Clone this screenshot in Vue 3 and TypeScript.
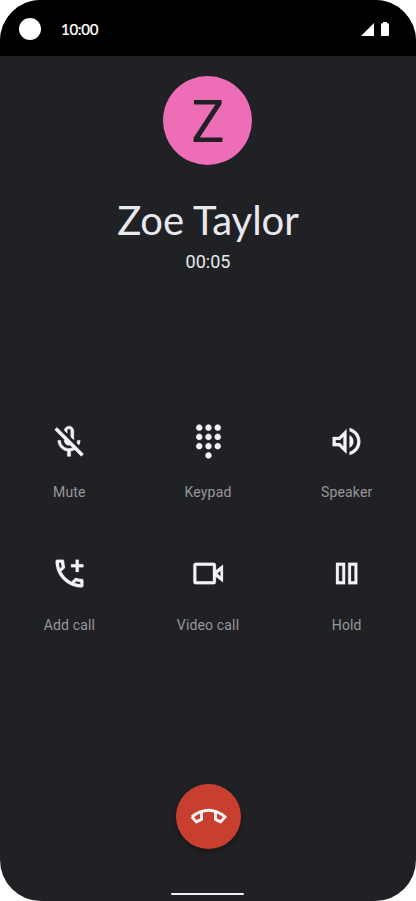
<script setup lang="ts">
interface CallAction {
  id: string
  label: string
  path: string
}

const actions: CallAction[] = [
  {
    id: 'mute',
    label: 'Mute',
    path: 'M10.8 4.9c0-.66.54-1.2 1.2-1.2s1.2.54 1.2 1.2l-.01 3.91L15 10.6V5c0-1.66-1.34-3-3-3-1.54 0-2.79 1.16-2.96 2.65l1.76 1.76V4.9zM19 11h-1.7c0 .58-.1 1.13-.27 1.64l1.27 1.27c.44-.88.7-1.87.7-2.91zM4.41 2.86L3 4.27l6 6V11c0 1.66 1.34 3 3 3 .23 0 .44-.03.65-.08l1.66 1.66c-.71.33-1.5.52-2.31.52-2.76 0-5.3-2.1-5.3-5.1H5c0 3.41 2.72 6.23 6 6.72V21h2v-3.28c.91-.13 1.77-.45 2.55-.9l4.2 4.2 1.41-1.41L4.41 2.86z',
  },
  {
    id: 'keypad',
    label: 'Keypad',
    path: 'M12 19c-1.1 0-2 .9-2 2s.9 2 2 2 2-.9 2-2-.9-2-2-2zM6 1c-1.1 0-2 .9-2 2s.9 2 2 2 2-.9 2-2-.9-2-2-2zm0 6c-1.1 0-2 .9-2 2s.9 2 2 2 2-.9 2-2-.9-2-2-2zm0 6c-1.1 0-2 .9-2 2s.9 2 2 2 2-.9 2-2-.9-2-2-2zm12-8c1.1 0 2-.9 2-2s-.9-2-2-2-2 .9-2 2 .9 2 2 2zm-6 8c-1.1 0-2 .9-2 2s.9 2 2 2 2-.9 2-2-.9-2-2-2zm6 0c-1.1 0-2 .9-2 2s.9 2 2 2 2-.9 2-2-.9-2-2-2zm0-6c-1.1 0-2 .9-2 2s.9 2 2 2 2-.9 2-2-.9-2-2-2zm-6 0c-1.1 0-2 .9-2 2s.9 2 2 2 2-.9 2-2-.9-2-2-2zm0-6c-1.1 0-2 .9-2 2s.9 2 2 2 2-.9 2-2-.9-2-2-2z',
  },
  {
    id: 'speaker',
    label: 'Speaker',
    path: 'M3 9v6h4l5 5V4L7 9H3zm7-.17v6.34L7.83 13H5v-2h2.83L10 8.83zM16.5 12c0-1.77-1.02-3.29-2.5-4.03v8.05c1.48-.73 2.5-2.25 2.5-4.02zM14 3.23v2.06c2.89.86 5 3.54 5 6.71s-2.11 5.85-5 6.71v2.06c4.01-.91 7-4.49 7-8.77 0-4.28-2.99-7.86-7-8.77z',
  },
  {
    id: 'add',
    label: 'Add call',
    path: 'M20 15.5c-1.25 0-2.45-.2-3.57-.57-.1-.03-.21-.05-.31-.05-.26 0-.51.1-.71.29l-2.2 2.2c-2.83-1.44-5.15-3.75-6.59-6.59l2.2-2.2c.28-.26.36-.65.25-1C8.7 6.45 8.5 5.25 8.5 4c0-.55-.45-1-1-1H4c-.55 0-1 .45-1 1 0 9.39 7.61 17 17 17 .55 0 1-.45 1-1v-3.5c0-.55-.45-1-1-1zM5.03 5h1.5c.07.88.22 1.75.46 2.59L5.79 8.8c-.41-1.21-.67-2.48-.76-3.8zM19 18.97c-1.32-.09-2.6-.35-3.8-.76l1.2-1.2c.85.24 1.71.39 2.6.45v1.51zM18 8h3V6h-3V3h-2v3h-3v2h3v3h2V8z',
  },
  {
    id: 'video',
    label: 'Video call',
    path: 'M3.7 5H15.3A1.5 1.5 0 0 1 16.8 6.5V9.9L21.4 6.3V17.7L16.8 14.1V17.5A1.5 1.5 0 0 1 15.3 19H3.7A1.5 1.5 0 0 1 2.2 17.5V6.5A1.5 1.5 0 0 1 3.7 5zM4.1 6.9V17.1H14.9V6.9zM17.8 12L19.8 13.9V10.1z',
  },
  {
    id: 'hold',
    label: 'Hold',
    path: 'M5.2 5H11.1V19H5.2zM7 6.9V17.1H9.3V6.9zM13.1 5H19V19H13.1zM14.9 6.9V17.1H17.2V6.9z',
  },
]
</script>

<template>
  <main class="phone">
    <header class="status">
      <span class="camera"></span>
      <span class="clock">10:00</span>
      <svg class="signal" viewBox="0 0 13 13"><path d="M13 0V13H0z" /></svg>
      <svg class="battery" viewBox="0 0 8 14"><path d="M2 0H6V1.2H7.2Q8 1.2 8 2V13.2Q8 14 7.2 14H.8Q0 14 0 13.2V2Q0 1.2.8 1.2H2z" /></svg>
    </header>
    <section class="caller">
      <div class="avatar"><span class="initial">Z</span></div>
      <h1 class="name">Zoe Taylor</h1>
      <p class="timer">00:05</p>
    </section>
    <section class="actions">
      <button v-for="action in actions" :key="action.id" class="action" type="button">
        <svg class="icon" :class="action.id" viewBox="0 0 24 24"><path :d="action.path" fill-rule="evenodd" /></svg>
        <span class="label">{{ action.label }}</span>
      </button>
    </section>
    <footer class="bottom">
      <button class="hangup" type="button" aria-label="End call">
        <svg class="receiver" viewBox="0 0 24 24">
          <path d="M1.2 12.2Q12 3.7 22.8 12.2L19.9 15.5L16.5 13.9V9.2M1.2 12.2L4.1 15.5L7.5 13.9V9.2" />
        </svg>
      </button>
      <span class="home"></span>
    </footer>
  </main>
</template>

<style>
body {
  margin: 0;
  background: #fff;
}
</style>

<style scoped>
.phone {
  width: 416px;
  height: 901px;
  display: flex;
  flex-direction: column;
  overflow: hidden;
  border-radius: 41px;
  background: #202125;
  color: #e8e9ee;
  font-family: Roboto, sans-serif;
}
.status {
  box-sizing: border-box;
  flex: none;
  height: 56px;
  display: flex;
  align-items: center;
  padding: 2px 27px 0 19px;
  background: #000;
}
.camera {
  width: 22px;
  height: 22px;
  border-radius: 50%;
  background: #fff;
}
.clock {
  margin-left: 20px;
  margin-right: auto;
  color: #fff;
  font: 500 15px/20px Lato, sans-serif;
  letter-spacing: -0.3px;
  -webkit-text-stroke: 0.2px #fff;
}
.signal {
  width: 13px;
  height: 13px;
  margin-right: 7px;
  fill: #fff;
}
.battery {
  width: 8px;
  height: 14px;
  fill: #fff;
}
.caller {
  flex: none;
  height: 354px;
  display: flex;
  flex-direction: column;
  align-items: center;
}
.avatar {
  width: 89px;
  height: 89px;
  margin: 20px 1px 0 0;
  display: flex;
  align-items: center;
  justify-content: center;
  border-radius: 50%;
  background: #ee6db7;
  color: #202125;
  font-size: 60px;
  line-height: 60px;
}
.initial {
  padding-top: 2px;
  transform: scaleX(0.93);
}
.name {
  margin: 31px 0 0;
  font: 400 40px/48px Lato, sans-serif;
  white-space: nowrap;
}
.timer {
  margin: 8px 0 0;
  font-size: 18px;
  line-height: 20px;
}
.actions {
  flex: none;
  display: grid;
  grid-template-columns: repeat(3, 138.7px);
  grid-auto-rows: 132.4px;
}
.action {
  display: flex;
  flex-direction: column;
  align-items: center;
  padding: 12.6px 0 0;
  border: 0;
  background: none;
  font-family: inherit;
}
.icon {
  width: 37px;
  height: 37px;
  flex: none;
  fill: #f3f4f8;
  stroke: #f3f4f8;
  stroke-width: 0.15;
}
.icon.mute {
  width: 38px;
  height: 38px;
  margin: 0 1px -1px 0;
  stroke-width: 0.35;
}
.label {
  margin-top: 22.6px;
  color: #96979b;
  font-size: 14px;
  line-height: 20px;
  letter-spacing: 0.15px;
}
.bottom {
  flex: 1;
  display: flex;
  flex-direction: column;
  align-items: center;
  justify-content: flex-end;
}
.hangup {
  width: 65px;
  height: 65px;
  display: flex;
  align-items: center;
  justify-content: center;
  padding: 0;
  border: 0;
  border-radius: 50%;
  background: #c93f2f;
  box-shadow: 0 3px 5px rgba(0, 0, 0, 0.3);
}
.receiver {
  width: 37px;
  height: 37px;
  fill: none;
  stroke: #f6f3f5;
  stroke-width: 1.9;
  stroke-linejoin: round;
}
.home {
  width: 73px;
  height: 2px;
  margin: 44.5px 1px 6px 0;
  border-radius: 1px;
  background: #f1f1f3;
}
</style>
